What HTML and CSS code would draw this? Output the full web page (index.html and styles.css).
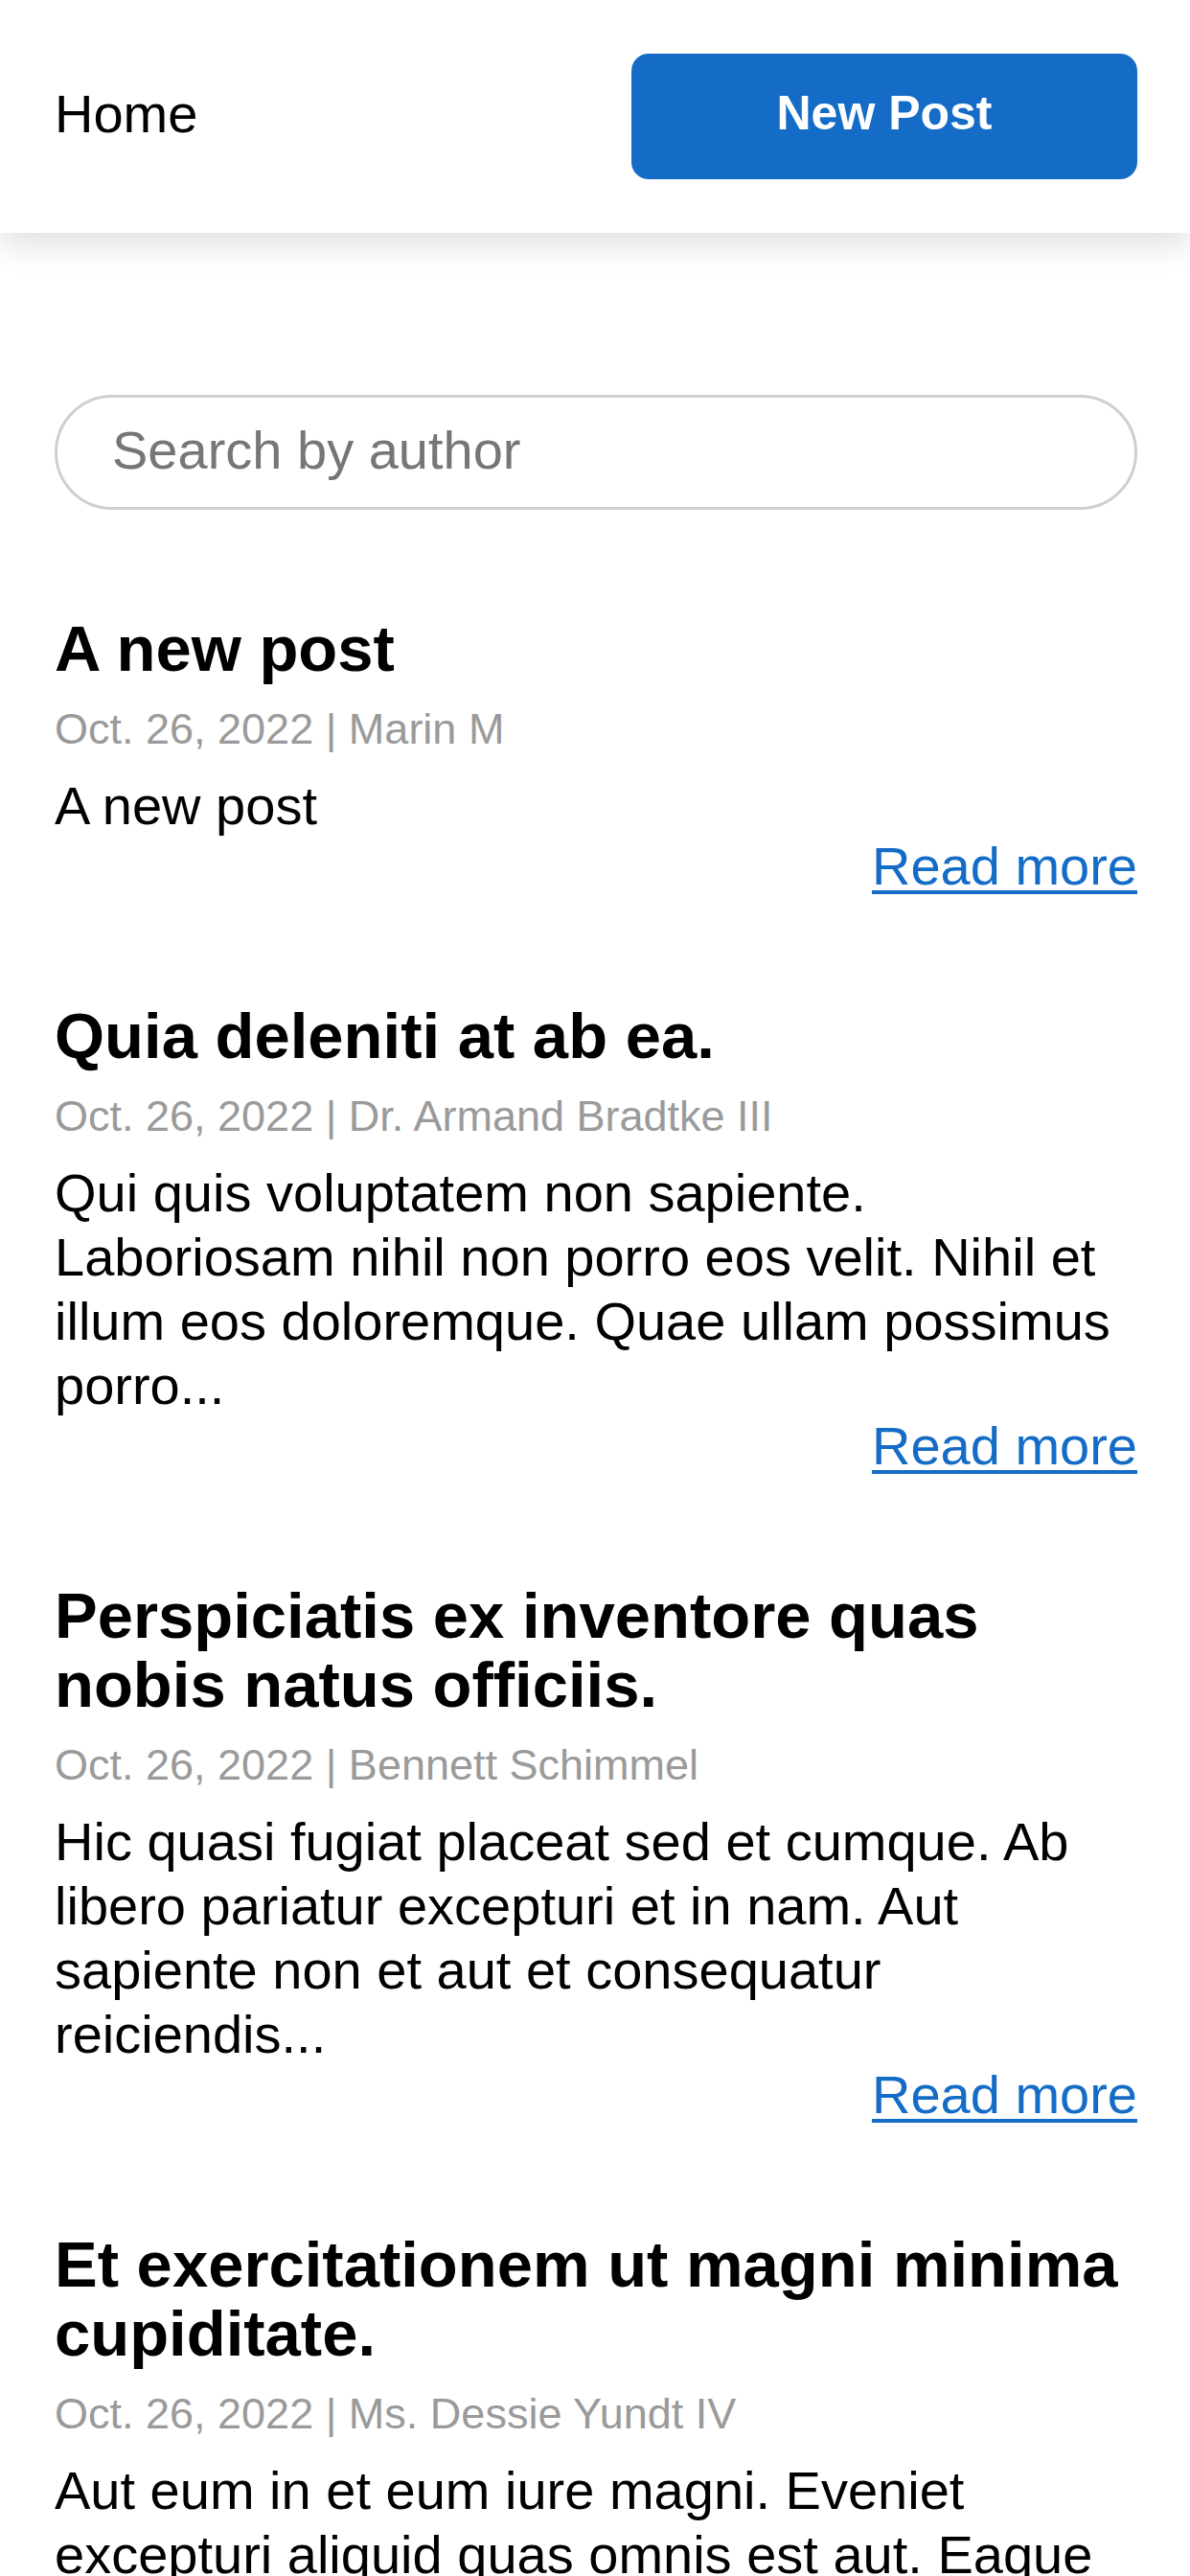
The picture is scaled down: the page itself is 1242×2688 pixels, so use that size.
FILE: index.html
```html
<!DOCTYPE html>
<html lang="en">
<head>
<meta charset="utf-8">
<title>Posts</title>
<link rel="stylesheet" href="styles.css">
</head>
<body>
<header class="topbar">
  <a class="home" href="#">Home</a>
  <button class="new-post" type="button">New Post</button>
</header>
<main class="content">
  <input class="search" type="text" placeholder="Search by author">
  <section class="posts">
    <article class="post">
      <h2 class="post-title">A new post</h2>
      <p class="post-meta">Oct. 26, 2022 | Marin M</p>
      <p class="post-body">A new post</p>
      <div class="post-more"><a href="#">Read more</a></div>
    </article>
    <article class="post">
      <h2 class="post-title">Quia deleniti at ab ea.</h2>
      <p class="post-meta">Oct. 26, 2022 | Dr. Armand Bradtke III</p>
      <p class="post-body">Qui quis voluptatem non sapiente. Laboriosam nihil non porro eos velit. Nihil et illum eos doloremque. Quae ullam possimus porro...</p>
      <div class="post-more"><a href="#">Read more</a></div>
    </article>
    <article class="post">
      <h2 class="post-title">Perspiciatis ex inventore quas nobis natus officiis.</h2>
      <p class="post-meta">Oct. 26, 2022 | Bennett Schimmel</p>
      <p class="post-body">Hic quasi fugiat placeat sed et cumque. Ab libero pariatur excepturi et in nam. Aut sapiente non et aut et consequatur reiciendis...</p>
      <div class="post-more"><a href="#">Read more</a></div>
    </article>
    <article class="post">
      <h2 class="post-title">Et exercitationem ut magni minima cupiditate.</h2>
      <p class="post-meta">Oct. 26, 2022 | Ms. Dessie Yundt IV</p>
      <p class="post-body">Aut eum in et eum iure magni. Eveniet excepturi aliquid quas omnis est aut. Eaque voluptas nihil quia et...</p>
      <div class="post-more"><a href="#">Read more</a></div>
    </article>
  </section>
</main>
</body>
</html>
```
FILE: styles.css
```css
html, body {
  margin: 0;
  padding: 0;
  background: #ffffff;
}

body {
  font-family: "Liberation Sans", Arial, Helvetica, sans-serif;
  color: #000000;
}

.topbar {
  height: 243px;
  box-sizing: border-box;
  padding: 0 55px 0 57px;
  display: flex;
  align-items: center;
  justify-content: space-between;
  background: #ffffff;
  box-shadow: 0 12px 32px rgba(0, 0, 0, 0.13);
  position: relative;
}

.home {
  font-size: 56px;
  color: #000000;
  text-decoration: none;
  padding-bottom: 6px;
}

.new-post {
  width: 528px;
  height: 131px;
  border: none;
  border-radius: 18px;
  background: #146cc7;
  color: #ffffff;
  font-family: "Liberation Sans", Arial, Helvetica, sans-serif;
  font-weight: bold;
  font-size: 50px;
  padding: 0 0 8px 0;
}

.content {
  padding: 169px 55px 0 57px;
}

.search {
  display: block;
  width: 100%;
  height: 120px;
  box-sizing: border-box;
  border: 3px solid #cfcfcf;
  border-radius: 60px;
  padding: 0 57px 6px;
  margin: 0 0 109px 0;
  font-family: "Liberation Sans", Arial, Helvetica, sans-serif;
  font-size: 56px;
  color: #000000;
  background: #ffffff;
  outline: none;
}

.search::placeholder {
  color: #767676;
}

.posts {
  display: flex;
  flex-direction: column;
  gap: 108px;
}

.post {
  display: flex;
  flex-direction: column;
}

.post-title {
  margin: 0 0 22px 0;
  font-size: 67px;
  line-height: 72px;
  font-weight: bold;
}

.post-meta {
  margin: 0 0 20px 0;
  font-size: 45px;
  line-height: 52px;
  color: #9a9a9a;
}

.post-body {
  margin: 0;
  font-size: 56px;
  line-height: 67px;
}

.post-more {
  text-align: right;
  font-size: 56px;
  line-height: 67px;
  margin-top: -4px;
}

.post-more a {
  color: #146cc7;
  text-decoration: underline;
  text-decoration-thickness: 4px;
  text-underline-offset: 6px;
}
```
